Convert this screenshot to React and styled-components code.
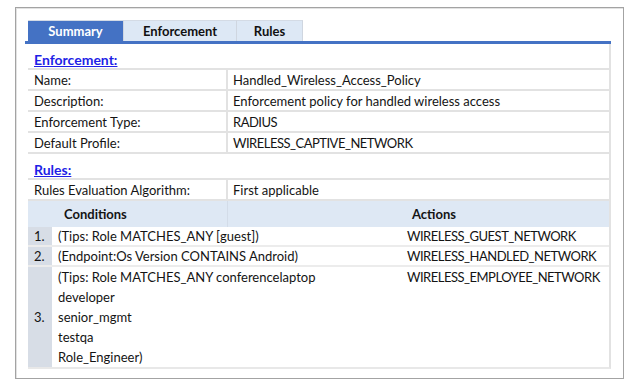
import React from 'react'
import styled, { createGlobalStyle } from 'styled-components'

const GlobalStyle = createGlobalStyle`
    body {
        margin: 0;
        background: #ffffff;
        font-family: Lato, "Liberation Sans", sans-serif;
        font-size: 13px;
        color: #141414;
    }
`

const summary = [
    ['Name:', 'Handled_Wireless_Access_Policy'],
    ['Description:', 'Enforcement policy for handled wireless access'],
    ['Enforcement Type:', 'RADIUS'],
    ['Default Profile:', 'WIRELESS_CAPTIVE_NETWORK'],
]

const rules = [
    { conditions: ['(Tips: Role MATCHES_ANY [guest])'], action: 'WIRELESS_GUEST_NETWORK' },
    { conditions: ['(Endpoint:Os Version CONTAINS Android)'], action: 'WIRELESS_HANDLED_NETWORK' },
    {
        conditions: [
            '(Tips: Role MATCHES_ANY conferencelaptop',
            'developer',
            'senior_mgmt',
            'testqa',
            'Role_Engineer)',
        ],
        action: 'WIRELESS_EMPLOYEE_NETWORK',
    },
]

const isCaps = (s) => s === s.toUpperCase()

export default function App() {
    return (
        <>
            <GlobalStyle />
            <Frame>
                <TabStrip>
                    <Tab active>Summary</Tab>
                    <Tab width={113}>Enforcement</Tab>
                    <Tab width={66}>Rules</Tab>
                </TabStrip>
                <Panel>
                    <Heading><span>Enforcement:</span></Heading>
                    {summary.map(([label, value]) => (
                        <Row key={label}>
                            <Label>{label}</Label>
                            <Value caps={isCaps(value)}>{value}</Value>
                        </Row>
                    ))}
                    <Heading><span>Rules:</span></Heading>
                    <Row>
                        <Label>Rules Evaluation Algorithm:</Label>
                        <Value>First applicable</Value>
                    </Row>
                    <HeaderRow>
                        <HeaderCell>Conditions</HeaderCell>
                        <HeaderCell actions>Actions</HeaderCell>
                    </HeaderRow>
                    {rules.map((rule, i) => (
                        <RuleRow key={i}>
                            <Num>{i + 1}.</Num>
                            <Conditions>
                                {rule.conditions.map((c) => <div key={c}>{c}</div>)}
                            </Conditions>
                            <Action>{rule.action}</Action>
                        </RuleRow>
                    ))}
                </Panel>
            </Frame>
        </>
    )
}

const Frame = styled.div`
    margin: 7px 0 0 15px;
    width: 609px;
    height: 372px;
    border: 1px solid #a3a3a3;
    box-shadow: inset 1px 1px 0 #e2e2e2;
    padding: 12px 12px 0 9px;
    box-sizing: border-box;
`

const TabStrip = styled.div`
    display: flex;
    padding-left: 3px;
    border-bottom: 3px solid #4472c4;
    width: 586px;
    box-sizing: border-box;
`

const Tab = styled.div`
    width: ${(p) => (p.width || 96)}px;
    height: 21px;
    box-sizing: border-box;
    display: flex;
    align-items: center;
    justify-content: center;
    font-weight: 700;
    font-size: 13px;
    background: ${(p) => (p.active ? '#4472c4' : '#dde8f5')};
    color: ${(p) => (p.active ? '#ffffff' : '#111111')};
    border-top: 1px solid #d4dbe5;
    border-right: 1px solid #cfd6e0;
`

const Panel = styled.div`
    margin-left: 3px;
    width: 583px;
    border-right: 2px solid #e2e2e2;
    border-bottom: 2px solid #e8e8e8;
    box-sizing: border-box;
`

const Heading = styled.div`
    height: 26px;
    display: flex;
    align-items: flex-end;
    padding: 0 0 1px 6px;
    box-sizing: border-box;
    border-bottom: 2px solid #e2e2e2;
    line-height: 15px;
    span {
        color: #1f1fe6;
        font-weight: 700;
        text-decoration: underline;
        font-size: 14px;
    }
`

const Row = styled.div`
    display: flex;
    height: 21px;
    border-bottom: 2px solid #e2e2e2;
    box-sizing: border-box;
`

const Label = styled.div`
    width: 200px;
    flex-shrink: 0;
    border-right: 2px solid #e2e2e2;
    box-sizing: border-box;
    padding-left: 6px;
    display: flex;
    align-items: center;
`

const Value = styled.div`
    flex: 1;
    padding-left: 5px;
    display: flex;
    align-items: center;
    letter-spacing: ${(p) => (p.caps ? '-0.5px' : 'normal')};
`

const HeaderRow = styled.div`
    display: flex;
    height: 26px;
    background: #dee8f4;
`

const HeaderCell = styled.div`
    width: ${(p) => (p.actions ? 'auto' : '200px')};
    flex: ${(p) => (p.actions ? 1 : 'none')};
    box-sizing: border-box;
    padding-left: ${(p) => (p.actions ? '184px' : '36px')};
    border-right: ${(p) => (p.actions ? 'none' : '1px solid #d3dce8')};
    font-weight: 700;
    display: flex;
    align-items: center;
`

const RuleRow = styled.div`
    display: flex;
    line-height: 18px;
    border-bottom: 2px solid #ececec;
    &:last-child {
        border-bottom: none;
        line-height: 20px;
    }
`

const Num = styled.div`
    width: 24px;
    flex-shrink: 0;
    background: #d7dde6;
    display: flex;
    align-items: center;
    padding-left: 6px;
    box-sizing: border-box;
`

const Conditions = styled.div`
    width: 355px;
    flex-shrink: 0;
    padding-left: 6px;
    box-sizing: border-box;
`

const Action = styled.div`
    flex: 1;
    min-width: 0;
    white-space: nowrap;
    letter-spacing: -0.5px;
`
